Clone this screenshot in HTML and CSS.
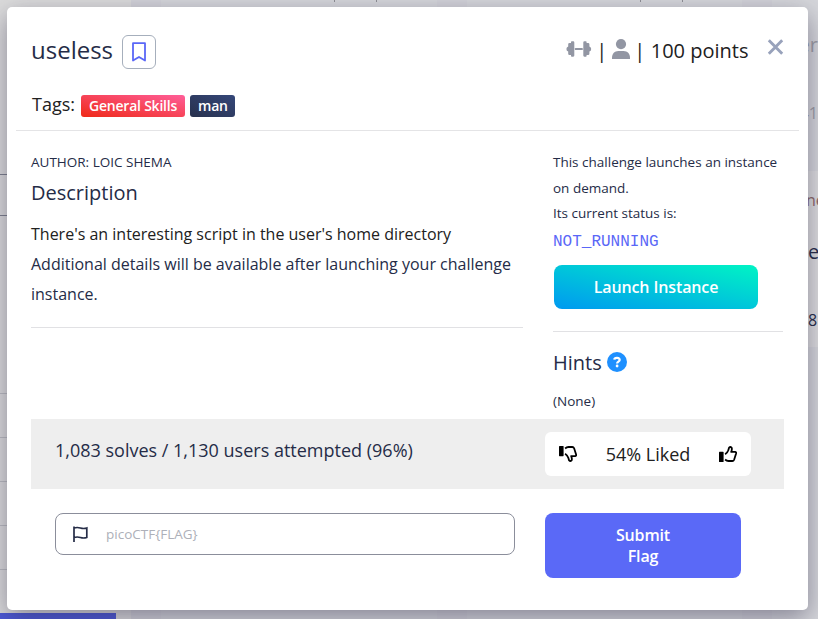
FILE: index.html
```html
<!DOCTYPE html>
<html lang="en">
<head>
<meta charset="utf-8">
<title>useless</title>
<link rel="stylesheet" href="styles.css">
</head>
<body>
<div class="page">
  <aside class="side">
    <div class="side-field"></div>
    <div class="side-line"></div><div class="side-line"></div><div class="side-line"></div><div class="side-line"></div><div class="side-line"></div>
    <div class="side-button"></div>
  </aside>
  <main class="board">
    <div class="board-gap"></div><div class="board-gap"></div><div class="board-gap"></div>
    <span class="peek p1">er</span><span class="peek p2">41</span>
    <div class="peek-card"><span class="peek p3">ne</span><span class="peek p4">e</span><span class="peek p5">8</span></div>
    <i class="tick t1"></i><i class="tick t2"></i><i class="tick t3"></i><i class="tick t4"></i>
  </main>
</div>
<section class="modal">
  <header class="head">
    <div class="title-row">
      <h1>useless</h1>
      <button class="bookmark" aria-label="Bookmark"><svg width="16" height="20" viewBox="0 0 16 20"><path d="M2 1.2h12v17.3L8 14.9 2 18.5z" fill="none" stroke="#5a67f7" stroke-width="1.8" stroke-linejoin="round"/></svg></button>
      <div class="meta">
        <svg width="26" height="16" viewBox="0 0 26 16" fill="#9296a3"><rect x="8.8" y="6.9" width="8" height="2.2" rx=".7"/><path d="M5 1Q5 .3 5.8.3h1.4Q8.300.3 8.300 1.400v13.200Q8.300 15.700 7.200 15.700H5.800Q5 15.700 5 15V14H3.500Q2.200 14 2.200 12.700V10.500Q.4 10 .4 8T2.200 5.500V3.300Q2.200 2 3.500 2H5z"/><path d="M20.600 1Q20.600.3 19.800.3h-1.400Q17.300.3 17.300 1.400v13.200Q17.300 15.700 18.400 15.700h1.400Q20.600 15.700 20.600 15V14h1.500Q23.400 14 23.400 12.700V10.500Q25.200 10 25.200 8T23.400 5.500V3.300Q23.400 2 22.100 2H20.600z"/></svg>
        <span class="bar">|</span>
        <svg width="18" height="20" viewBox="0 0 18 20" fill="#9296a3"><circle cx="9" cy="5.100" r="5.100"/><path d="M0 20v-1.500C0 14.800 2.800 12 6.300 12h5.400c3.500 0 6.300 2.800 6.300 6.500V20z"/></svg>
        <span class="bar">|</span>
        <span class="points">100 points</span>
      </div>
      <button class="close" aria-label="Close"><svg width="16" height="16" viewBox="0 0 16 16"><path d="M1.300 1.300l13.400 13.400M14.700 1.300L1.300 14.700" stroke="#98a2bb" stroke-width="2.900"/></svg></button>
    </div>
    <div class="tags"><span class="tags-label">Tags:</span><span class="tag red">General Skills</span><span class="tag navy">man</span></div>
  </header>
  <div class="body">
    <div class="cols">
      <article class="about">
        <p class="author">AUTHOR: LOIC SHEMA</p>
        <h2>Description</h2>
        <p class="desc"><span class="dark">There's an interesting script in the user's home directory</span><br>Additional details will be available after launching your challenge instance.</p>
      </article>
      <aside class="instance">
        <p class="status">This challenge launches an instance on demand.<br>Its current status is:</p>
        <code>NOT_RUNNING</code>
        <button class="launch">Launch Instance</button>
        <hr>
        <div class="hints"><h2>Hints</h2><svg width="20" height="20" viewBox="0 0 20 20"><circle cx="10" cy="10" r="10" fill="#1e90ff"/><path d="M7.300 7.600C7.500 5.200 12.700 5.200 12.700 8c0 1.700-2.600 1.700-2.600 3.500" fill="none" stroke="#fff" stroke-width="2.200"/><circle cx="10.100" cy="14" r="1.400" fill="#fff"/></svg></div>
        <p class="none">(None)</p>
      </aside>
    </div>
    <div class="stats">
      <span class="solves">1,083 solves / 1,130 users attempted (96%)</span>
      <div class="likes">
        <svg width="18" height="16" viewBox="0 0 18 16"><g transform="matrix(1 0 0 -1 0 16)"><rect y="5.800" width="4.600" height="10.200" rx=".6"/><path d="M6.100 8.300Q8.300 6.900 9.300 4.200L10.100 1.600Q11.300.4 12.600 1.600q.7 1.600-.4 4.300h4q1.200.3.900 1.600l-2 6.200q-.5 1.300-1.800 1.300H9.500Q7.700 14.900 6.100 13.500" fill="none" stroke="#000" stroke-width="1.800" stroke-linejoin="round"/></g></svg>
        <span>54% Liked</span>
        <svg width="18" height="16" viewBox="0 0 18 16"><rect y="5.800" width="4.600" height="10.200" rx=".6"/><path d="M6.100 8.300Q8.300 6.900 9.300 4.200L10.100 1.600Q11.300.4 12.600 1.600q.7 1.600-.4 4.300h4q1.200.3.900 1.600l-2 6.200q-.5 1.300-1.800 1.300H9.500Q7.700 14.900 6.100 13.500" fill="none" stroke="#000" stroke-width="1.800" stroke-linejoin="round"/></svg>
      </div>
    </div>
    <div class="submit-row">
      <label class="flag"><svg width="15" height="16" viewBox="0 0 15 16"><path d="M1 .5V16M1 2q3.200-1 6.400 0t6.400 0v9.500q-3.200 1-6.400 0T1 11.500" fill="none" stroke="#252c47" stroke-width="1.700"/></svg><input placeholder="picoCTF{FLAG}"></label>
      <button class="submit">Submit<br>Flag</button>
    </div>
  </div>
</section>
</body>
</html>
```
FILE: styles.css
```css
* { box-sizing: border-box; }
body { margin: 0; height: 619px; overflow: hidden; font-family: "Open Sans", sans-serif; color: #252c47; }
h1, h2, p { margin: 0; font-weight: 400; }
button { border: 0; padding: 0; font-family: inherit; background: none; }
svg { display: block; flex: none; }

.page { display: flex; height: 619px; }
.side { width: 131px; background: #dcdcdc; padding-top: 174px; position: relative; }
.side-field { height: 42px; margin-bottom: 177px; border: solid #7c808c; border-width: 1px 0; }
.side-line { height: 44px; border-top: 1px solid #bbbcc0; }
.side-button { position: absolute; left: 0; bottom: 0; width: 116px; height: 6px; background: #4c59d6; }
.board { flex: 1; position: relative; overflow: hidden; background: #d6d7db; display: flex; gap: 275.5px; }
.board-gap { flex: none; width: 30px; background: #d3d3d9; }
.peek-card { position: absolute; left: 635px; top: 171px; width: 60px; height: 176px; background: #dededf; }
.peek { position: absolute; line-height: 24px; white-space: nowrap; }
.p1 { right: 0; top: 33px; font-size: 20px; color: #9d9da5; }
.p2 { right: 0; top: 101px; font-size: 16px; color: #9d9da5; }
.p3 { left: 40px; top: 17px; font-size: 16px; color: #8d6868; }
.p4 { left: 42px; top: 69px; font-size: 20px; }
.p5 { left: 42px; top: 137px; font-size: 16px; }
.tick { position: absolute; top: 0; width: 1px; height: 2px; background: #8e8e95; }
.t1 { left: 203px; } .t2 { left: 245px; } .t3 { left: 509px; } .t4 { left: 551px; }

.modal { position: absolute; left: 7px; top: 7px; width: 801px; height: 603px; background: #fff; border-radius: 5px; box-shadow: 0 8px 26px rgba(40, 35, 65, .46); }
.head { height: 124px; margin: 0 9px; padding: 28px 15px 0; border-bottom: 1px solid #e4e4e6; }
.title-row { display: flex; height: 34px; }
h1 { font-size: 24px; line-height: 30px; }
.bookmark { display: flex; justify-content: center; align-items: center; width: 34px; height: 34px; margin-left: 9px; border: 1px solid #a6afbc; border-radius: 6px; }
.meta { display: flex; align-items: center; height: 30px; margin-left: auto; font-size: 20px; color: #212121; }
.meta svg { margin-top: -2px; }
.bar { width: 20px; text-align: center; }
.points { margin-left: 1px; }
.close { width: 16px; height: 16px; margin: 4px .5px 0 19px; transform: translateX(-.5px); }
.tags { display: flex; align-items: center; height: 26px; margin-top: 23px; padding-left: 1px; }
.tags-label { width: 49px; font-size: 18px; line-height: 24px; color: #212121; margin-top: -2px; }
.tag { height: 22px; padding: 0 8px; margin-right: 5px; border-radius: 3px; color: #fff; font-size: 14px; line-height: 22px; font-weight: 600; letter-spacing: -.22px; margin-top: 2px; }
.red { background: linear-gradient(to top right, #ef2917, #ff5e99); }
.navy { width: 45px; background: linear-gradient(to top right, #28314d, #354779); }

.body { padding: 0 24px; }
.cols { display: flex; gap: 30px; height: 288px; }
.about { width: 492px; height: 197px; border-bottom: 1px solid #e1e1e4; padding-top: 18px; }
.author { font-size: 13.500px; line-height: 26px; }
h2 { font-size: 20px; line-height: 30px; }
.about h2 { margin-top: 3px; }
.desc { margin-top: 11px; font-size: 16px; line-height: 30px; }
.dark { color: #212121; }
.instance { width: 230px; padding-top: 19px; }
.status, .none { font-size: 13.500px; line-height: 25.600px; }
code { display: block; margin-top: 1px; font: 16px/28px "Liberation Mono", monospace; color: #5a67f7; }
.launch { display: block; width: 204px; height: 44px; margin: 9px 0 0 1px; border-radius: 8px; color: #fff; font-size: 16px; font-weight: 600; letter-spacing: -.12px; background: linear-gradient(to top right, #0099f0, #00f4c4); }
hr { margin: 22px 0 16px; border: 0; border-top: 1px solid #e1e1e4; }
.hints { display: flex; gap: 5px; height: 30px; align-items: center; }
.hints svg { margin-top: -1px; }
.none { margin-top: 11px; }

.stats { display: flex; justify-content: space-between; height: 70px; width: 753px; padding: 13px 33px 0 24px; background: #eee; }
.solves { font-size: 18px; line-height: 36px; }
.likes { display: flex; justify-content: space-between; align-items: center; width: 206px; height: 44px; padding: 0 14px; border-radius: 6px; background: #fff; color: #212121; font-size: 18px; }
.submit-row { display: flex; align-items: flex-start; gap: 30px; padding: 24px 24px 0; }
.flag { display: flex; align-items: center; gap: 18px; width: 460px; height: 42px; padding: 0 17px; border: 1px solid #8b8e9b; border-radius: 8px; }
input { flex: 1; min-width: 0; padding: 0; border: 0; outline: 0; background: none; font: 13.500px "Open Sans", sans-serif; }
input::placeholder { color: #adb0b9; opacity: 1; }
.submit { width: 196px; height: 65px; border-radius: 8px; color: #fff; background: #5a69f7; font-size: 16px; line-height: 21px; font-weight: 600; letter-spacing: -.15px; }
```
